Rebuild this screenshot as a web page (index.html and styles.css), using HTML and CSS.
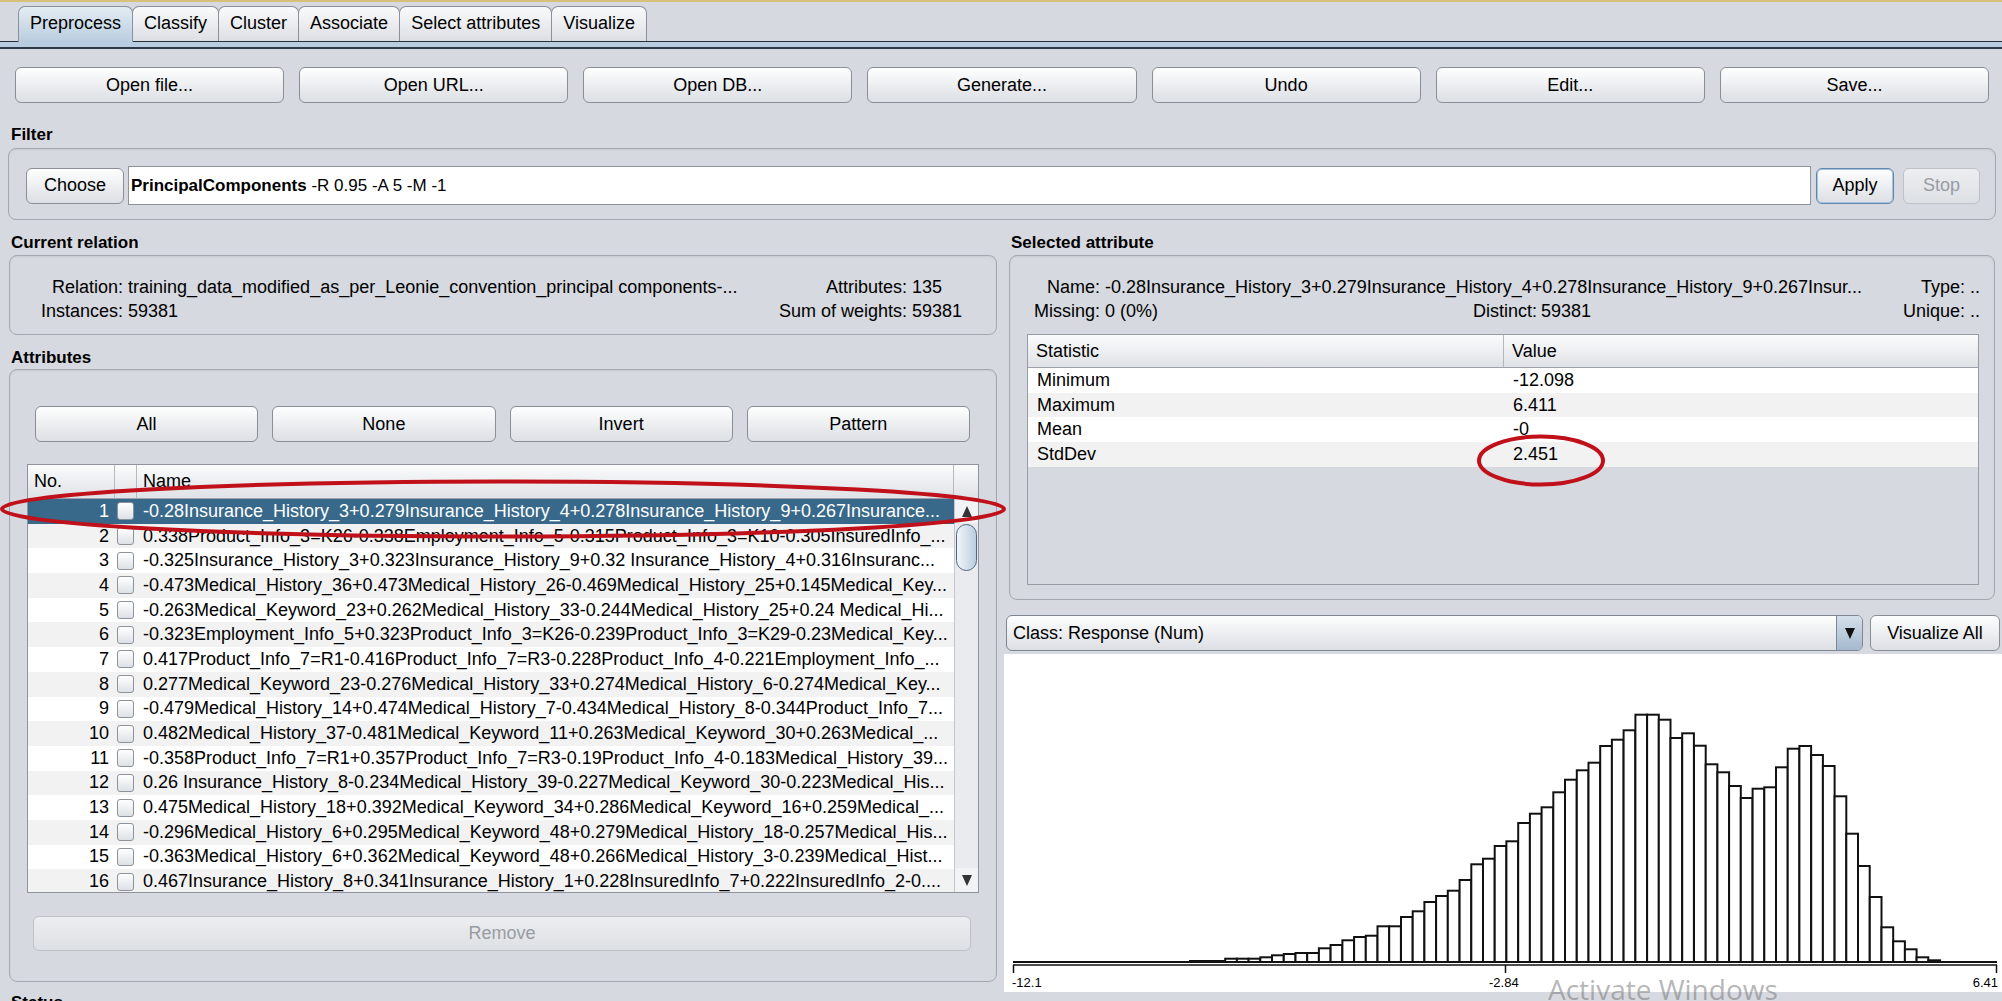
FILE: index.html
```html
<!DOCTYPE html>
<html lang="en">
<head>
    <meta charset="UTF-8">
    <title>Weka Explorer - Preprocess</title>
    <link rel="stylesheet" href="styles.css">
</head>
<body>
<div class="window">
    <div class="tabs">
        <div class="tab active">Preprocess</div>
        <div class="tab">Classify</div>
        <div class="tab">Cluster</div>
        <div class="tab">Associate</div>
        <div class="tab">Select attributes</div>
        <div class="tab">Visualize</div>
    </div>
    <div class="tabband"></div>

    <div class="toolbar">
        <button class="btn">Open file...</button>
        <button class="btn">Open URL...</button>
        <button class="btn">Open DB...</button>
        <button class="btn">Generate...</button>
        <button class="btn">Undo</button>
        <button class="btn">Edit...</button>
        <button class="btn">Save...</button>
    </div>

    <div class="section-label filter-label">Filter</div>
    <div class="panel filter">
        <button class="btn choose">Choose</button>
        <div class="field"><b>PrincipalComponents</b> -R 0.95 -A 5 -M -1</div>
        <button class="btn apply">Apply</button>
        <button class="btn stop" disabled>Stop</button>
    </div>

    <div class="columns">
        <div class="col">
            <div class="section-label">Current relation</div>
            <div class="panel relation">
                <span class="lbl">Relation:</span>
                <span class="val">training_data_modified_as_per_Leonie_convention_principal components-...</span>
                <span class="lbl">Attributes:</span>
                <span class="val">135</span>
                <span class="lbl">Instances:</span>
                <span class="val">59381</span>
                <span class="lbl">Sum of weights:</span>
                <span class="val">59381</span>
            </div>

            <div class="section-label attr-label">Attributes</div>
            <div class="panel attributes">
                <div class="btnrow">
                    <button class="btn">All</button>
                    <button class="btn">None</button>
                    <button class="btn">Invert</button>
                    <button class="btn">Pattern</button>
                </div>
                <div class="attr-table">
                    <div class="thead">
                        <span>No.</span>
                        <span></span>
                        <span>Name</span>
                        <span></span>
                    </div>
                    <div class="tbody">
                        <div class="rows">
                            <div class="row sel"><span class="num">1</span><span class="chk"></span><span class="name">-0.28Insurance_History_3+0.279Insurance_History_4+0.278Insurance_History_9+0.267Insurance...</span></div>
                            <div class="row alt"><span class="num">2</span><span class="chk"></span><span class="name">0.338Product_Info_3=K26-0.338Employment_Info_5-0.315Product_Info_3=K10-0.305InsuredInfo_...</span></div>
                            <div class="row"><span class="num">3</span><span class="chk"></span><span class="name">-0.325Insurance_History_3+0.323Insurance_History_9+0.32 Insurance_History_4+0.316Insuranc...</span></div>
                            <div class="row alt"><span class="num">4</span><span class="chk"></span><span class="name">-0.473Medical_History_36+0.473Medical_History_26-0.469Medical_History_25+0.145Medical_Key...</span></div>
                            <div class="row"><span class="num">5</span><span class="chk"></span><span class="name">-0.263Medical_Keyword_23+0.262Medical_History_33-0.244Medical_History_25+0.24 Medical_Hi...</span></div>
                            <div class="row alt"><span class="num">6</span><span class="chk"></span><span class="name">-0.323Employment_Info_5+0.323Product_Info_3=K26-0.239Product_Info_3=K29-0.23Medical_Key...</span></div>
                            <div class="row"><span class="num">7</span><span class="chk"></span><span class="name">0.417Product_Info_7=R1-0.416Product_Info_7=R3-0.228Product_Info_4-0.221Employment_Info_...</span></div>
                            <div class="row alt"><span class="num">8</span><span class="chk"></span><span class="name">0.277Medical_Keyword_23-0.276Medical_History_33+0.274Medical_History_6-0.274Medical_Key...</span></div>
                            <div class="row"><span class="num">9</span><span class="chk"></span><span class="name">-0.479Medical_History_14+0.474Medical_History_7-0.434Medical_History_8-0.344Product_Info_7...</span></div>
                            <div class="row alt"><span class="num">10</span><span class="chk"></span><span class="name">0.482Medical_History_37-0.481Medical_Keyword_11+0.263Medical_Keyword_30+0.263Medical_...</span></div>
                            <div class="row"><span class="num">11</span><span class="chk"></span><span class="name">-0.358Product_Info_7=R1+0.357Product_Info_7=R3-0.19Product_Info_4-0.183Medical_History_39...</span></div>
                            <div class="row alt"><span class="num">12</span><span class="chk"></span><span class="name">0.26 Insurance_History_8-0.234Medical_History_39-0.227Medical_Keyword_30-0.223Medical_His...</span></div>
                            <div class="row"><span class="num">13</span><span class="chk"></span><span class="name">0.475Medical_History_18+0.392Medical_Keyword_34+0.286Medical_Keyword_16+0.259Medical_...</span></div>
                            <div class="row alt"><span class="num">14</span><span class="chk"></span><span class="name">-0.296Medical_History_6+0.295Medical_Keyword_48+0.279Medical_History_18-0.257Medical_His...</span></div>
                            <div class="row"><span class="num">15</span><span class="chk"></span><span class="name">-0.363Medical_History_6+0.362Medical_Keyword_48+0.266Medical_History_3-0.239Medical_Hist...</span></div>
                            <div class="row alt"><span class="num">16</span><span class="chk"></span><span class="name">0.467Insurance_History_8+0.341Insurance_History_1+0.228InsuredInfo_7+0.222InsuredInfo_2-0....</span></div>
                        </div>
                        <div class="vscroll">
                            <div class="arrow up"></div>
                            <div class="thumb"></div>
                            <div class="track"></div>
                            <div class="arrow down"></div>
                        </div>
                    </div>
                </div>
                <button class="btn remove" disabled>Remove</button>
            </div>
        </div>

        <div class="col">
            <div class="section-label">Selected attribute</div>
            <div class="panel selected">
                <div class="info">
                    <span class="lbl">Name:</span>
                    <span class="val span-name">-0.28Insurance_History_3+0.279Insurance_History_4+0.278Insurance_History_9+0.267Insur...</span>
                    <span class="lbl">Type:</span>
                    <span class="val">..</span>
                    <span class="lbl">Missing:</span>
                    <span class="val">0 (0%)</span>
                    <span class="val">Distinct:</span>
                    <span class="val">59381</span>
                    <span class="lbl">Unique:</span>
                    <span class="val">..</span>
                </div>
                <div class="stats">
                    <div class="stats-head"><span>Statistic</span><span>Value</span></div>
                    <div class="stats-row"><span>Minimum</span><span>-12.098</span></div>
                    <div class="stats-row alt"><span>Maximum</span><span>6.411</span></div>
                    <div class="stats-row"><span>Mean</span><span>-0</span></div>
                    <div class="stats-row alt"><span>StdDev</span><span>2.451</span></div>
                </div>
            </div>

            <div class="classrow">
                <div class="combo">
                    <span class="combo-text">Class: Response (Num)</span>
                    <span class="combo-arrow"></span>
                </div>
                <button class="btn visualize">Visualize All</button>
            </div>

            <div class="histogram">
                <svg width="998" height="338" viewBox="0 0 998 338">
                    <g fill="#fff" stroke="#111" stroke-width="2">
                        <rect x="186.0" y="307" width="11.7" height="1"/>
                        <rect x="197.7" y="307" width="11.7" height="1"/>
                        <rect x="209.4" y="307" width="11.7" height="1"/>
                        <rect x="221.2" y="304.7" width="11.7" height="3.3"/>
                        <rect x="232.9" y="304.7" width="11.7" height="3.3"/>
                        <rect x="244.6" y="304.7" width="11.7" height="3.3"/>
                        <rect x="256.3" y="303.3" width="11.7" height="4.7"/>
                        <rect x="268.0" y="301.3" width="11.7" height="6.7"/>
                        <rect x="279.8" y="300" width="11.7" height="8"/>
                        <rect x="291.5" y="299" width="11.7" height="9"/>
                        <rect x="303.2" y="299" width="11.7" height="9"/>
                        <rect x="314.9" y="294.3" width="11.7" height="13.7"/>
                        <rect x="326.6" y="291" width="11.7" height="17"/>
                        <rect x="338.4" y="286.3" width="11.7" height="21.7"/>
                        <rect x="350.1" y="283" width="11.7" height="25"/>
                        <rect x="361.8" y="281.7" width="11.7" height="26.3"/>
                        <rect x="373.5" y="272.3" width="11.7" height="35.7"/>
                        <rect x="385.2" y="272.3" width="11.7" height="35.7"/>
                        <rect x="397.0" y="263" width="11.7" height="45"/>
                        <rect x="408.7" y="257.3" width="11.7" height="50.7"/>
                        <rect x="420.4" y="248" width="11.7" height="60"/>
                        <rect x="432.1" y="242" width="11.7" height="66"/>
                        <rect x="443.8" y="236.7" width="11.7" height="71.3"/>
                        <rect x="455.6" y="226" width="11.7" height="82"/>
                        <rect x="467.3" y="210.3" width="11.7" height="97.7"/>
                        <rect x="479.0" y="204.7" width="11.7" height="103.3"/>
                        <rect x="490.7" y="192" width="11.7" height="116"/>
                        <rect x="502.4" y="187.3" width="11.7" height="120.7"/>
                        <rect x="514.2" y="169" width="11.7" height="139"/>
                        <rect x="525.9" y="159.7" width="11.7" height="148.3"/>
                        <rect x="537.6" y="153.3" width="11.7" height="154.7"/>
                        <rect x="549.3" y="138.3" width="11.7" height="169.7"/>
                        <rect x="561.0" y="125.7" width="11.7" height="182.3"/>
                        <rect x="572.8" y="116.3" width="11.7" height="191.7"/>
                        <rect x="584.5" y="108.7" width="11.7" height="199.3"/>
                        <rect x="596.2" y="92" width="11.7" height="216"/>
                        <rect x="607.9" y="85.7" width="11.7" height="222.3"/>
                        <rect x="619.6" y="76.3" width="11.7" height="231.7"/>
                        <rect x="631.4" y="60.7" width="11.7" height="247.3"/>
                        <rect x="643.1" y="60.7" width="11.7" height="247.3"/>
                        <rect x="654.8" y="65.7" width="11.7" height="242.3"/>
                        <rect x="666.5" y="84" width="11.7" height="224"/>
                        <rect x="678.2" y="79.3" width="11.7" height="228.7"/>
                        <rect x="690.0" y="91.7" width="11.7" height="216.3"/>
                        <rect x="701.7" y="110.3" width="11.7" height="197.7"/>
                        <rect x="713.4" y="118.3" width="11.7" height="189.7"/>
                        <rect x="725.1" y="132" width="11.7" height="176"/>
                        <rect x="736.8" y="144" width="11.7" height="164"/>
                        <rect x="748.6" y="134.7" width="11.7" height="173.3"/>
                        <rect x="760.3" y="133.3" width="11.7" height="174.7"/>
                        <rect x="772.0" y="113.3" width="11.7" height="194.7"/>
                        <rect x="783.7" y="94.7" width="11.7" height="213.3"/>
                        <rect x="795.4" y="92" width="11.7" height="216"/>
                        <rect x="807.2" y="101" width="11.7" height="207"/>
                        <rect x="818.9" y="112" width="11.7" height="196"/>
                        <rect x="830.6" y="142.3" width="11.7" height="165.7"/>
                        <rect x="842.3" y="179.7" width="11.7" height="128.3"/>
                        <rect x="854.0" y="212" width="11.7" height="96"/>
                        <rect x="865.8" y="243" width="11.7" height="65"/>
                        <rect x="877.5" y="273.3" width="11.7" height="34.7"/>
                        <rect x="889.2" y="287.3" width="11.7" height="20.7"/>
                        <rect x="900.9" y="295.3" width="11.7" height="12.7"/>
                        <rect x="912.6" y="303.3" width="11.7" height="4.7"/>
                        <rect x="924.4" y="306.3" width="11.7" height="1.7"/>
                    </g>
                    <g stroke="#111" fill="none">
                        <line x1="9" y1="308" x2="993" y2="308" stroke-width="2"/>
                        <line x1="9" y1="311" x2="993" y2="311" stroke-width="1.5"/>
                        <line x1="9.5" y1="311" x2="9.5" y2="319" stroke-width="1.5"/>
                        <line x1="501.5" y1="311" x2="501.5" y2="319" stroke-width="1.5"/>
                        <line x1="992.5" y1="311" x2="992.5" y2="319" stroke-width="1.5"/>
                    </g>
                    <g class="axis-text">
                        <text x="8" y="333">-12.1</text>
                        <text x="485" y="333">-2.84</text>
                        <text x="994" y="333" text-anchor="end">6.41</text>
                    </g>
                </svg>
            </div>
        </div>
    </div>

    <div class="section-label">Status</div>
</div>

<svg class="marks" width="2002" height="1001" viewBox="0 0 2002 1001">
    <ellipse cx="503" cy="509" rx="501" ry="27.5"/>
    <ellipse cx="1541" cy="460.5" rx="62" ry="24"/>
</svg>
<div class="watermark">Activate Windows</div>
</body>
</html>
```

FILE: styles.css
```css
* {
    box-sizing: border-box;
}
body {
    margin: 0;
    position: relative;
    height: 1001px;
    overflow: hidden;
    background: #d6d9df;
    font-family: "Liberation Sans", Arial, sans-serif;
    font-size: 18px;
    color: #000;
}
.window {
    border-top: 2px solid #d8c07a;
    padding: 0 7px 0 9px;
}

/* tabs */
.tabs {
    display: flex;
    align-items: flex-end;
    height: 40px;
    margin: 0 -7px 0 -9px;
    padding-left: 18px;
    border-bottom: 1px solid #27303c;
}
.tab {
    height: 35px;
    line-height: 33px;
    padding: 0 11px;
    margin-right: -1px;
    border: 1px solid #8b919a;
    border-bottom: none;
    border-radius: 7px 7px 0 0;
    background: linear-gradient(#fafafb, #dcdfe4);
}
.tab.active {
    position: relative;
    height: 36px;
    margin-bottom: -1px;
    background: linear-gradient(#e3ecf3, #b9cde0);
}
.tabband {
    height: 7px;
    margin: 0 -7px 0 -9px;
    background: #b9cde0;
    border-bottom: 2px solid #2e3949;
}

/* buttons */
.btn {
    height: 36px;
    padding: 0;
    font: inherit;
    color: #000;
    border: 1px solid #8a8f97;
    border-radius: 6px;
    background: linear-gradient(#fefefe, #eef0f2 45%, #dcdfe4);
}
.btn:disabled {
    color: #979ca3;
    border-color: #bec2c8;
    background: linear-gradient(#eceef1, #dde0e4);
}
.toolbar {
    display: grid;
    grid-template-columns: repeat(7, 1fr);
    gap: 15px;
    margin-top: 18px;
    padding: 0 6px;
}

/* titled panels */
.section-label {
    height: 22px;
    line-height: 22px;
    padding-left: 2px;
    font-size: 17px;
    font-weight: bold;
}
.filter-label {
    margin-top: 21px;
}
.attr-label {
    margin-top: 12px;
}
.panel {
    border: 1px solid #a4a9b1;
    border-radius: 8px;
    box-shadow: inset 0 1px 2px rgba(0, 0, 0, 0.07);
}

.filter {
    display: flex;
    align-items: center;
    height: 72px;
    margin: 2px -1px 0;
    padding: 3px 15px 0 17px;
}
.choose {
    width: 98px;
    flex: none;
}
.field {
    flex: 1;
    height: 39px;
    margin-left: 4px;
    padding-left: 2px;
    line-height: 37px;
    font-size: 17px;
    white-space: nowrap;
    background: #fff;
    border: 1px solid #8d939b;
}
.apply {
    width: 78px;
    flex: none;
    margin-left: 5px;
    border-color: #5f86ae;
    box-shadow: inset 0 0 0 1px #a9c3dc;
}
.stop {
    width: 77px;
    flex: none;
    margin-left: 9px;
}

.columns {
    display: grid;
    grid-template-columns: 988px 986px;
    column-gap: 12px;
    margin-top: 12px;
}
.col {
    min-width: 0;
}

.lbl {
    text-align: right;
    white-space: nowrap;
}
.val {
    white-space: nowrap;
    overflow: hidden;
}

.relation {
    display: grid;
    grid-template-columns: 113px 640px 134px 1fr;
    grid-auto-rows: 24px;
    column-gap: 5px;
    line-height: 24px;
    height: 80px;
    margin-top: 1px;
    padding: 19px 0 11px;
}

/* attributes */
.attributes {
    display: flex;
    flex-direction: column;
    height: 613px;
    padding-top: 36px;
}
.btnrow {
    display: grid;
    grid-template-columns: repeat(4, 1fr);
    gap: 14px;
    margin: 0 26px 0 25px;
}
.attr-table {
    margin: 22px 17px 0;
    border: 1px solid #8f949c;
    background: #fff;
}
.thead {
    display: grid;
    grid-template-columns: 87px 22px 1fr 24px;
    height: 34px;
    line-height: 33px;
    border-bottom: 1px solid #9ea3ab;
    background: linear-gradient(#fbfbfc, #dfe2e6);
}
.thead span {
    padding-left: 6px;
    border-right: 1px solid #b5b9c0;
}
.thead span:last-child {
    border-right: none;
}
.tbody {
    display: flex;
    height: 393px;
}
.rows {
    flex: 1;
    min-width: 0;
    overflow: hidden;
}
.row {
    display: grid;
    grid-template-columns: 87px 22px 1fr;
    align-items: center;
    height: 24.7px;
    background: #fff;
}
.row.alt {
    background: #f2f2f2;
}
.row.sel {
    background: #39698a;
    color: #fff;
}
.num {
    text-align: right;
    padding-right: 6px;
}
.chk {
    width: 17px;
    height: 18px;
    margin-left: 2px;
    border: 1px solid #8d939b;
    border-radius: 3px;
    background: linear-gradient(#fff, #dde1e6);
}
.name {
    padding-left: 6px;
    white-space: nowrap;
    overflow: hidden;
}
.vscroll {
    display: flex;
    flex-direction: column;
    width: 24px;
    background: #e9ebee;
    border-left: 1px solid #c3c7cd;
}
.arrow {
    display: flex;
    align-items: center;
    justify-content: center;
    height: 24px;
    background: #f2f3f5;
}
.arrow.up::after {
    content: "";
    border-left: 5px solid transparent;
    border-right: 5px solid transparent;
    border-bottom: 11px solid #333;
}
.arrow.down::after {
    content: "";
    border-left: 5px solid transparent;
    border-right: 5px solid transparent;
    border-top: 11px solid #333;
}
.thumb {
    height: 47px;
    margin: 1px 1px 0;
    border: 1px solid #52647a;
    border-radius: 12px;
    background: linear-gradient(to right, #f1f5f9, #bccde0);
}
.track {
    flex: 1;
}
.remove {
    height: 35px;
    margin: 23px 25px 0 23px;
}

/* selected attribute */
.selected {
    height: 345px;
    margin-top: 1px;
    padding: 19px 0 14px;
}
.info {
    display: grid;
    grid-template-columns: 95px 368px 68px 349px 80px 24px;
    grid-auto-rows: 24px;
    line-height: 24px;
}
.info .lbl {
    padding-right: 5px;
}
.info .span-name {
    grid-column: 2 / 5;
}
.stats {
    height: 251px;
    margin: 11px 15px 0 17px;
    border: 1px solid #979ca4;
}
.stats-head,
.stats-row {
    display: grid;
    grid-template-columns: 476px 1fr;
}
.stats-head {
    height: 33px;
    line-height: 32px;
    border-bottom: 1px solid #9ea3ab;
    background: linear-gradient(#fbfbfc, #dfe2e6);
}
.stats-head span {
    padding-left: 8px;
}
.stats-head span:first-child {
    border-right: 1px solid #b3b7be;
}
.stats-row {
    height: 24.7px;
    line-height: 24.7px;
    background: #fff;
}
.stats-row.alt {
    background: #f2f2f2;
}
.stats-row span {
    padding-left: 9px;
}

.classrow {
    display: flex;
    gap: 7px;
    height: 36px;
    margin: 15px -7px 0 -3px;
    padding-right: 2px;
}
.combo {
    flex: 1;
    display: flex;
    border: 1px solid #7e8691;
    border-radius: 6px;
    overflow: hidden;
    background: linear-gradient(#fefefe, #eef0f2 45%, #dcdfe4);
}
.combo-text {
    flex: 1;
    line-height: 34px;
    padding-left: 6px;
}
.combo-arrow {
    display: flex;
    align-items: center;
    justify-content: center;
    width: 26px;
    border-left: 1px solid #7e8691;
    background: linear-gradient(#d5e0ea, #a4b9cd);
}
.combo-arrow::after {
    content: "";
    border-left: 5px solid transparent;
    border-right: 5px solid transparent;
    border-top: 11px solid #111;
}
.visualize {
    width: 130px;
    flex: none;
}

.histogram {
    height: 338px;
    margin: 3px -7px 0 -5px;
    background: #fff;
}
.histogram svg {
    display: block;
}
.axis-text {
    font-family: "Liberation Sans", Arial, sans-serif;
    font-size: 13px;
    fill: #000;
}

/* annotations laid over the screenshot */
.marks {
    position: absolute;
    left: 0;
    top: 0;
    pointer-events: none;
}
.marks ellipse {
    fill: none;
    stroke: #c0101a;
    stroke-width: 4;
}
.watermark {
    position: absolute;
    left: 1548px;
    top: 970px;
    font-family: "Open Sans", "Liberation Sans", sans-serif;
    font-size: 28px;
    color: rgba(120, 120, 120, 0.55);
    white-space: nowrap;
}
```
